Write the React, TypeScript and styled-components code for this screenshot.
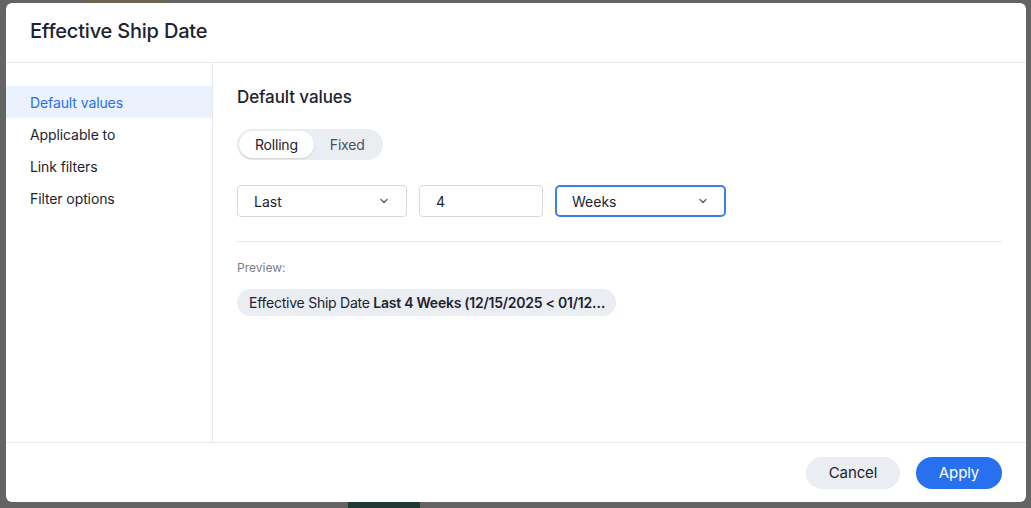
import styled, { createGlobalStyle } from 'styled-components';

const GlobalStyle = createGlobalStyle`
    html, body {
        margin: 0;
        padding: 0;
        background: #646464;
        font-family: Inter, "Noto Sans", sans-serif;
        color: #1d232f;
    }
    * {
        box-sizing: border-box;
    }
`;

const Backdrop = styled.div`
    position: relative;
    width: 1031px;
    height: 508px;
    padding: 3px 5px 6px 6px;
    overflow: hidden;
`;

const BackdropPatch = styled.div<{ $color: string }>`
    position: absolute;
    background: ${(props) => props.$color};
`;

const Modal = styled.div`
    position: relative;
    width: 1020px;
    height: 499px;
    background: #fff;
    border-radius: 6px;
    display: grid;
    grid-template-rows: 60px 1fr 59px;
    overflow: hidden;
`;

const Header = styled.div`
    display: flex;
    align-items: center;
    padding: 0 24px 3px;
    border-bottom: 1px solid #e6e9ee;
`;

const Title = styled.h1`
    margin: 0;
    font-size: 20px;
    font-weight: 500;
    letter-spacing: -0.2px;
`;

const Body = styled.div`
    display: grid;
    grid-template-columns: 207px 1fr;
    border-bottom: 1px solid #e6e9ee;
`;

const Sidebar = styled.nav`
    border-right: 1px solid #e6e9ee;
    padding-top: 23px;
`;

const NavItem = styled.div<{ $active?: boolean }>`
    height: 32px;
    display: flex;
    align-items: center;
    padding-left: 24px;
    font-size: 14px;
    letter-spacing: -0.1px;
    color: ${(props) => (props.$active ? '#2770ef' : '#1d232f')};
    background: ${(props) => (props.$active ? '#ebf2fd' : 'transparent')};
`;

const Content = styled.div`
    padding: 23px 24px 0 24px;
`;

const SectionTitle = styled.h2`
    margin: 0 0 21px;
    font-size: 17px;
    font-weight: 500;
    line-height: 22px;
    letter-spacing: -0.1px;
`;

const Segmented = styled.div`
    display: inline-flex;
    align-items: center;
    height: 31px;
    padding: 2px;
    background: #eaedf2;
    border-radius: 16px;
`;

const Segment = styled.div<{ $active?: boolean }>`
    height: 27px;
    display: flex;
    align-items: center;
    padding: 0 16px;
    border-radius: 14px;
    font-size: 14px;
    letter-spacing: -0.2px;
    color: ${(props) => (props.$active ? '#1d232f' : '#4a515e')};
    background: ${(props) => (props.$active ? '#fff' : 'transparent')};
    box-shadow: ${(props) => (props.$active ? '0 1px 2px rgba(0,0,0,0.12)' : 'none')};
`;

const Row = styled.div`
    display: flex;
    gap: 12px;
    margin-top: 25px;
`;

const Field = styled.div<{ $width: number; $focused?: boolean }>`
    width: ${(props) => props.$width}px;
    height: 32px;
    display: flex;
    align-items: center;
    justify-content: space-between;
    padding: 0 ${(props) => (props.$focused ? '15px' : '16px')};
    border: ${(props) => (props.$focused ? '2px solid #3a7ff2' : '1px solid #d5d9e0')};
    border-radius: ${(props) => (props.$focused ? '5px' : '4px')};
    font-size: 14px;
    color: #1d232f;
`;

const Divider = styled.div`
    height: 1px;
    background: #e6e9ee;
    margin-top: 24px;
`;

const PreviewLabel = styled.div`
    margin-top: 18px;
    font-size: 12px;
    color: #777e8b;
`;

const Chip = styled.div`
    margin-top: 14px;
    display: inline-block;
    height: 27px;
    line-height: 27px;
    padding: 0 11px 0 12px;
    border-radius: 14px;
    background: #eaedf2;
    font-size: 14px;
    letter-spacing: -0.25px;
    white-space: nowrap;
`;

const Strong = styled.b`
    font-weight: 600;
`;

const Footer = styled.div`
    display: flex;
    align-items: center;
    justify-content: flex-end;
    gap: 16px;
    padding: 0 24px 0;
`;

const Button = styled.button<{ $primary?: boolean; $width: number }>`
    width: ${(props) => props.$width}px;
    height: 32px;
    padding: 0;
    border: none;
    border-radius: 16px;
    font-family: inherit;
    font-size: 15px;
    letter-spacing: -0.1px;
    color: ${(props) => (props.$primary ? '#fff' : '#1d232f')};
    background: ${(props) => (props.$primary ? '#2770ef' : '#eaedf2')};
`;

const Chevron = () => (
    <svg width='12' height='12' viewBox='0 0 12 12' fill='none'>
        <path d='M3 4.5 6 7.5 9 4.5' stroke='#5a616d' strokeWidth='1.4' strokeLinecap='round' strokeLinejoin='round' />
    </svg>
);

const App = () => {
    return (
        <>
            <GlobalStyle />
            <Backdrop>
                <BackdropPatch $color='#6b6550' style={{ left: 84, top: 0, width: 82, height: 3 }} />
                <BackdropPatch $color='#1e3a35' style={{ left: 348, top: 502, width: 72, height: 6 }} />
                <Modal>
                    <Header>
                        <Title>Effective Ship Date</Title>
                    </Header>
                    <Body>
                        <Sidebar>
                            <NavItem $active>Default values</NavItem>
                            <NavItem>Applicable to</NavItem>
                            <NavItem>Link filters</NavItem>
                            <NavItem>Filter options</NavItem>
                        </Sidebar>
                        <Content>
                            <SectionTitle>Default values</SectionTitle>
                            <Segmented>
                                <Segment $active>Rolling</Segment>
                                <Segment>Fixed</Segment>
                            </Segmented>
                            <Row>
                                <Field $width={170}>
                                    Last
                                    <Chevron />
                                </Field>
                                <Field $width={124}>4</Field>
                                <Field $width={171} $focused>
                                    Weeks
                                    <Chevron />
                                </Field>
                            </Row>
                            <Divider />
                            <PreviewLabel>Preview:</PreviewLabel>
                            <Chip>
                                Effective Ship Date <Strong>Last 4 Weeks (12/15/2025 &lt; 01/12…</Strong>
                            </Chip>
                        </Content>
                    </Body>
                    <Footer>
                        <Button $width={94}>Cancel</Button>
                        <Button $width={86} $primary>Apply</Button>
                    </Footer>
                </Modal>
            </Backdrop>
        </>
    );
};

export default App;
